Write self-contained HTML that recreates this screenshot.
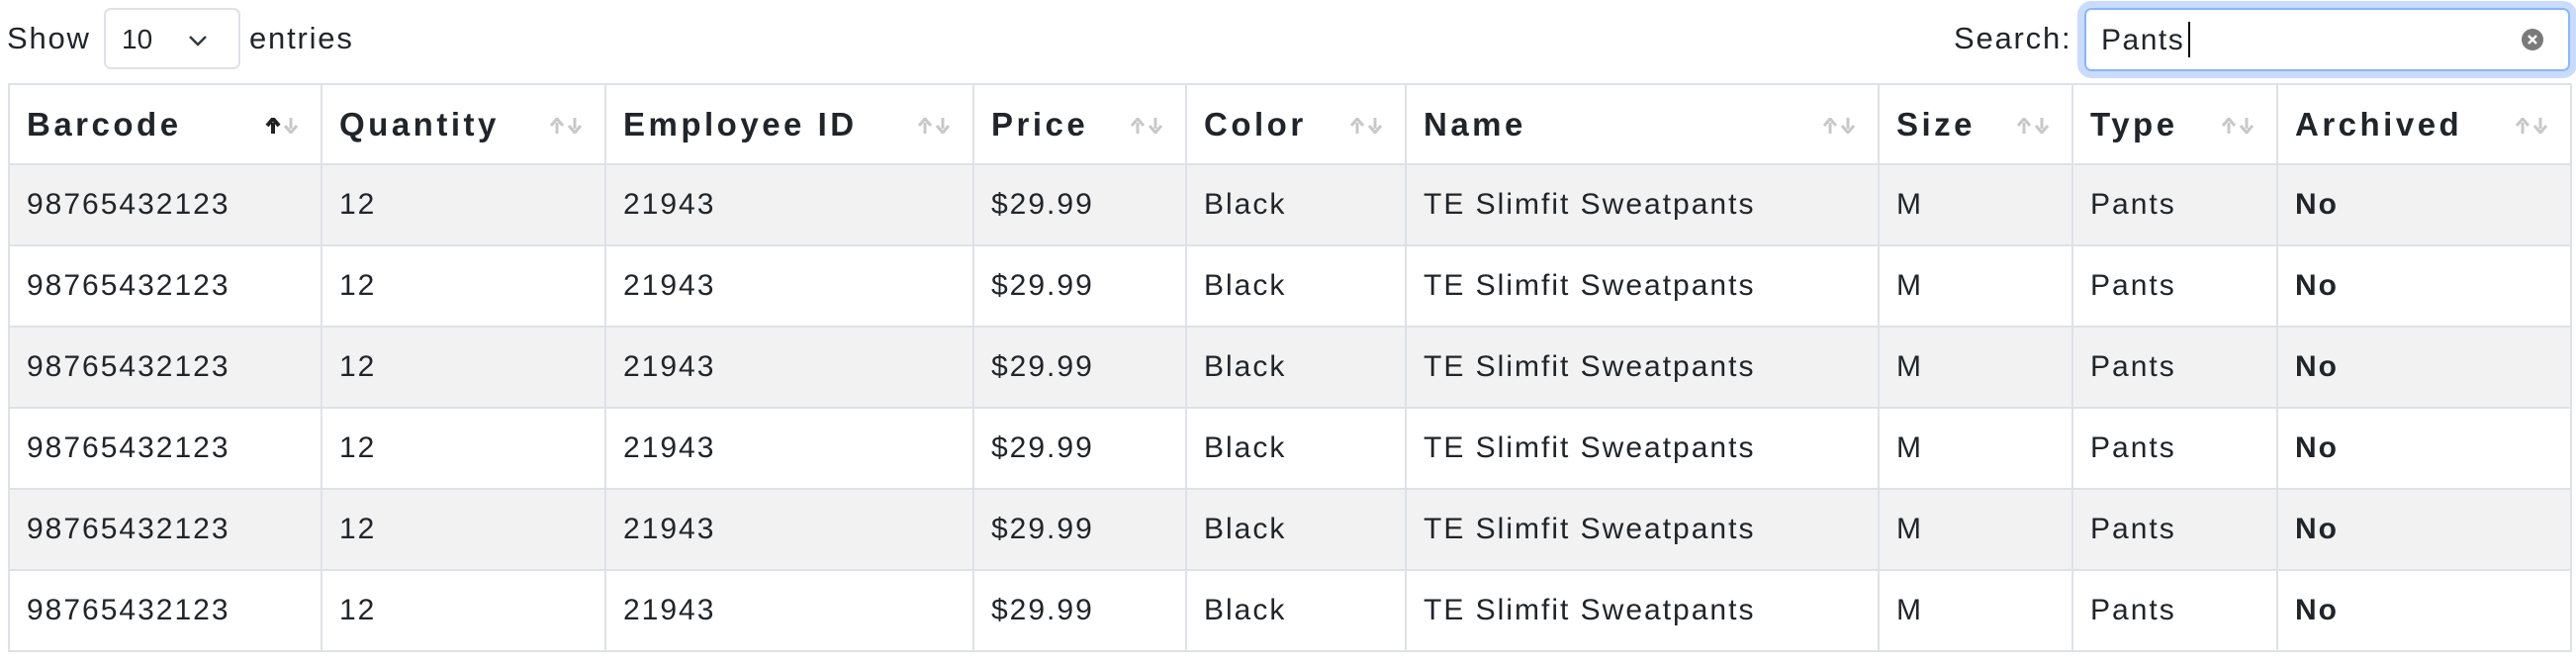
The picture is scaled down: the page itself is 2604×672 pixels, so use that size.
<!DOCTYPE html>
<html><head><meta charset="utf-8"><style>
body{margin:0;width:2604px;height:672px;background:#fff;font-family:"Liberation Sans",sans-serif;color:#212529;overflow:hidden;position:relative}
.top{position:absolute;font-size:31px;letter-spacing:1.8px}
.sel{position:absolute;left:105px;top:8px;width:138px;height:62px;border:2px solid #dee2e6;border-radius:7px;box-sizing:border-box;font-size:28px}
.inp{position:absolute;left:2107px;top:8px;width:491px;height:64px;border:2px solid #86b7fe;border-radius:7px;box-sizing:border-box;box-shadow:0 0 0 7px #c9dcfb;font-size:30px;letter-spacing:1.5px}
table{position:absolute;left:8px;top:84px;border-collapse:collapse;table-layout:fixed;width:2590px}
td,th{border:2px solid #dee2e6;padding:0 0 0 17px;text-align:left;font-size:30px;letter-spacing:2px;position:relative;white-space:nowrap}
th{height:79px;font-weight:bold;font-size:33px;letter-spacing:3.5px}
td{height:80px}
tr.s td{background:#f2f2f2}
.ar{position:absolute;right:22px;top:33px;width:34px;height:16px}
</style></head><body>
<div class="top" style="left:7px;top:21px">Show</div>
<div class="sel"><span style="position:absolute;left:16px;top:14px">10</span>
<svg style="position:absolute;left:82px;top:24px" width="22" height="14" viewBox="0 0 22 14"><path d="M3 3l8 8 8-8" fill="none" stroke="#343a40" stroke-width="2.5"/></svg></div>
<div class="top" style="left:252px;top:21px">entries</div>
<div class="top" style="left:1975px;top:21px">Search:</div>
<div class="inp"><span style="position:absolute;left:15px;top:14px">Pants</span><span style="position:absolute;left:103px;top:12px;width:2px;height:36px;background:#000"></span>
<svg style="position:absolute;left:439px;top:18px" width="24" height="24" viewBox="0 0 24 24"><circle cx="12" cy="12" r="11" fill="#7a7a7a"/><path d="M8 8l8 8M16 8l-8 8" stroke="#fff" stroke-width="2.4"/></svg></div>
<table>
<colgroup><col style="width:316px"><col style="width:287px"><col style="width:372px"><col style="width:215px"><col style="width:222px"><col style="width:478px"><col style="width:196px"><col style="width:207px"><col style="width:297px"></colgroup>
<tr>
<th>Barcode<svg class="ar" viewBox="0 0 34 16"><path d="M8 16V5M2 8l6-7 6 7" fill="none" stroke="#222" stroke-width="4"/><path d="M26 0v11M20 8l6 7 6-7" fill="none" stroke="#c8c8c8" stroke-width="3"/></svg></th>
<th>Quantity<svg class="ar" viewBox="0 0 34 16"><path d="M8 16V5M2 8l6-7 6 7" fill="none" stroke="#c8c8c8" stroke-width="3"/><path d="M26 0v11M20 8l6 7 6-7" fill="none" stroke="#c8c8c8" stroke-width="3"/></svg></th>
<th>Employee ID<svg class="ar" viewBox="0 0 34 16"><path d="M8 16V5M2 8l6-7 6 7" fill="none" stroke="#c8c8c8" stroke-width="3"/><path d="M26 0v11M20 8l6 7 6-7" fill="none" stroke="#c8c8c8" stroke-width="3"/></svg></th>
<th>Price<svg class="ar" viewBox="0 0 34 16"><path d="M8 16V5M2 8l6-7 6 7" fill="none" stroke="#c8c8c8" stroke-width="3"/><path d="M26 0v11M20 8l6 7 6-7" fill="none" stroke="#c8c8c8" stroke-width="3"/></svg></th>
<th>Color<svg class="ar" viewBox="0 0 34 16"><path d="M8 16V5M2 8l6-7 6 7" fill="none" stroke="#c8c8c8" stroke-width="3"/><path d="M26 0v11M20 8l6 7 6-7" fill="none" stroke="#c8c8c8" stroke-width="3"/></svg></th>
<th>Name<svg class="ar" viewBox="0 0 34 16"><path d="M8 16V5M2 8l6-7 6 7" fill="none" stroke="#c8c8c8" stroke-width="3"/><path d="M26 0v11M20 8l6 7 6-7" fill="none" stroke="#c8c8c8" stroke-width="3"/></svg></th>
<th>Size<svg class="ar" viewBox="0 0 34 16"><path d="M8 16V5M2 8l6-7 6 7" fill="none" stroke="#c8c8c8" stroke-width="3"/><path d="M26 0v11M20 8l6 7 6-7" fill="none" stroke="#c8c8c8" stroke-width="3"/></svg></th>
<th>Type<svg class="ar" viewBox="0 0 34 16"><path d="M8 16V5M2 8l6-7 6 7" fill="none" stroke="#c8c8c8" stroke-width="3"/><path d="M26 0v11M20 8l6 7 6-7" fill="none" stroke="#c8c8c8" stroke-width="3"/></svg></th>
<th>Archived<svg class="ar" viewBox="0 0 34 16"><path d="M8 16V5M2 8l6-7 6 7" fill="none" stroke="#c8c8c8" stroke-width="3"/><path d="M26 0v11M20 8l6 7 6-7" fill="none" stroke="#c8c8c8" stroke-width="3"/></svg></th>
</tr>
<tr class="s"><td>98765432123</td><td>12</td><td>21943</td><td>$29.99</td><td>Black</td><td>TE Slimfit Sweatpants</td><td>M</td><td>Pants</td><td><b>No</b></td></tr>
<tr><td>98765432123</td><td>12</td><td>21943</td><td>$29.99</td><td>Black</td><td>TE Slimfit Sweatpants</td><td>M</td><td>Pants</td><td><b>No</b></td></tr>
<tr class="s"><td>98765432123</td><td>12</td><td>21943</td><td>$29.99</td><td>Black</td><td>TE Slimfit Sweatpants</td><td>M</td><td>Pants</td><td><b>No</b></td></tr>
<tr><td>98765432123</td><td>12</td><td>21943</td><td>$29.99</td><td>Black</td><td>TE Slimfit Sweatpants</td><td>M</td><td>Pants</td><td><b>No</b></td></tr>
<tr class="s"><td>98765432123</td><td>12</td><td>21943</td><td>$29.99</td><td>Black</td><td>TE Slimfit Sweatpants</td><td>M</td><td>Pants</td><td><b>No</b></td></tr>
<tr><td>98765432123</td><td>12</td><td>21943</td><td>$29.99</td><td>Black</td><td>TE Slimfit Sweatpants</td><td>M</td><td>Pants</td><td><b>No</b></td></tr>
</table>
</body></html>
